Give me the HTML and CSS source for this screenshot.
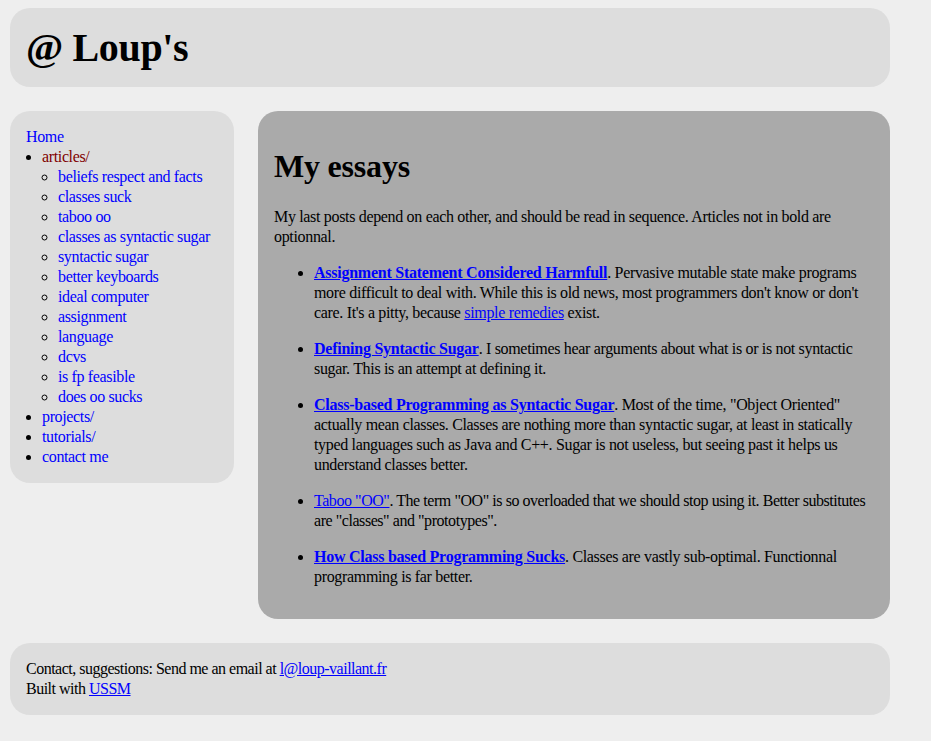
FILE: index.html
```html
<!DOCTYPE html>
<html lang="en">
<head>
<meta charset="utf-8">
<title>@ Loup's - My essays</title>
<link rel="stylesheet" href="styles.css">
</head>
<body>
<div class="page">
  <header class="site-header">
    <h1 class="site-title">@ Loup's</h1>
  </header>
  <div class="columns">
    <nav class="sidebar">
      <div class="home"><a href="#">Home</a></div>
      <ul class="nav-list">
        <li><a class="current" href="#">articles/</a>
          <ul class="sub-list">
            <li><a href="#">beliefs respect and facts</a></li>
            <li><a href="#">classes suck</a></li>
            <li><a href="#">taboo oo</a></li>
            <li><a href="#">classes as syntactic sugar</a></li>
            <li><a href="#">syntactic sugar</a></li>
            <li><a href="#">better keyboards</a></li>
            <li><a href="#">ideal computer</a></li>
            <li><a href="#">assignment</a></li>
            <li><a href="#">language</a></li>
            <li><a href="#">dcvs</a></li>
            <li><a href="#">is fp feasible</a></li>
            <li><a href="#">does oo sucks</a></li>
          </ul>
        </li>
        <li><a href="#">projects/</a></li>
        <li><a href="#">tutorials/</a></li>
        <li><a href="#">contact me</a></li>
      </ul>
    </nav>
    <main class="content">
      <h1 class="page-title">My essays</h1>
      <p class="intro">My last posts depend on each other, and should be read in sequence. Articles not in bold are optionnal.</p>
      <ul class="essays">
        <li><a class="strong" href="#">Assignment Statement Considered Harmfull</a>. Pervasive mutable state make programs more difficult to deal with. While this is old news, most programmers don't know or don't care. It's a pitty, because <a href="#">simple remedies</a> exist.</li>
        <li><a class="strong" href="#">Defining Syntactic Sugar</a>. I sometimes hear arguments about what is or is not syntactic sugar. This is an attempt at defining it.</li>
        <li><a class="strong" href="#">Class-based Programming as Syntactic Sugar</a>. Most of the time, "Object Oriented" actually mean classes. Classes are nothing more than syntactic sugar, at least in statically typed languages such as Java and C++. Sugar is not useless, but seeing past it helps us understand classes better.</li>
        <li class="tight"><a href="#">Taboo "OO"</a>. The term "OO" is so overloaded that we should stop using it. Better substitutes are "classes" and "prototypes".</li>
        <li><a class="strong" href="#">How Class based Programming Sucks</a>. Classes are vastly sub-optimal. Functionnal programming is far better.</li>
      </ul>
    </main>
  </div>
  <footer class="site-footer">
    <div>Contact, suggestions: Send me an email at <a href="#">l@loup-vaillant.fr</a></div>
    <div>Built with <a href="#">USSM</a></div>
  </footer>
</div>
</body>
</html>
```

FILE: styles.css
```css
html, body {
  margin: 0;
  padding: 0;
  background: #eeeeee;
}

body {
  font-family: "Liberation Serif", "Times New Roman", serif;
  font-size: 16px;
  line-height: 1.25;
  letter-spacing: -0.33px;
  color: #000;
}

a {
  color: #00f;
}

.page {
  width: 880px;
  margin: 8px 10px;
}

.site-header {
  background: #dddddd;
  border-radius: 20px;
  padding: 16px;
  height: 47px;
}

.site-title {
  margin: 0;
  font-size: 40px;
  line-height: normal;
  letter-spacing: -0.35px;
  font-weight: bold;
}

.columns {
  display: flex;
  align-items: flex-start;
  gap: 24px;
  margin: 24px 0;
}

.sidebar {
  flex: 0 0 192px;
  padding: 16px;
  background: #dddddd;
  border-radius: 20px;
  letter-spacing: -0.36px;
}

.sidebar a {
  text-decoration: none;
}

.sidebar a.current {
  color: #800000;
}

.nav-list {
  margin: 0;
  padding-left: 16px;
  list-style: disc;
}

.sub-list {
  margin: 0;
  padding-left: 16px;
  list-style: circle;
}

.content {
  flex: 1;
  padding: 16px;
  background: #aaaaaa;
  border-radius: 20px;
}

.page-title {
  font-size: 32px;
  line-height: normal;
  letter-spacing: -0.2px;
  margin: 21.44px 0;
}

.intro {
  margin: 16px 0;
}

.essays {
  margin: 16px 0;
  padding-left: 40px;
}

.essays li {
  margin: 16px 0;
}

.essays li.tight {
  letter-spacing: -0.45px;
}

.strong {
  font-weight: bold;
  letter-spacing: -0.25px;
}

.site-footer {
  background: #dddddd;
  border-radius: 20px;
  padding: 16px;
  letter-spacing: -0.5px;
}
```
